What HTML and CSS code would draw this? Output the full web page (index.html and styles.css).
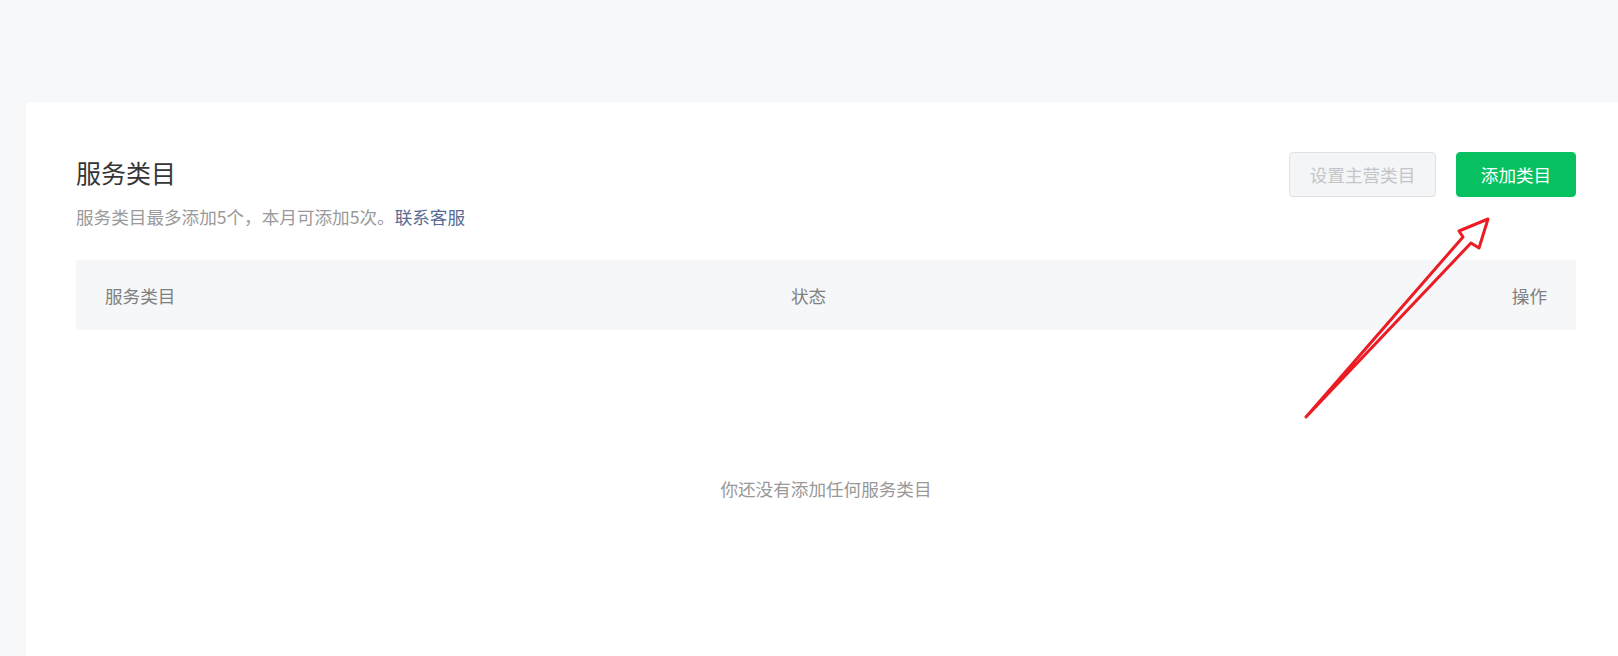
FILE: index.html
```html
<!DOCTYPE html>
<html lang="zh-CN">
<head>
    <meta charset="UTF-8">
    <meta name="viewport" content="width=device-width, initial-scale=1.0">
    <title>服务类目</title>
    <link rel="stylesheet" href="styles.css">
</head>
<body>
    <div class="page">
        <div class="card">
            <div class="card-head">
                <div class="head-text">
                    <h2 class="title">服务类目</h2>
                    <p class="desc">服务类目最多添加5个，本月可添加5次。<a href="#" class="link">联系客服</a></p>
                </div>
                <div class="head-actions">
                    <button class="btn btn-disabled" disabled>设置主营类目</button>
                    <button class="btn btn-primary">添加类目</button>
                </div>
            </div>

            <div class="table">
                <div class="table-head">
                    <div class="col">服务类目</div>
                    <div class="col">状态</div>
                    <div class="col col-right">操作</div>
                </div>
                <div class="table-empty">你还没有添加任何服务类目</div>
            </div>
        </div>
    </div>

    <!-- 标注箭头 -->
    <svg class="mark" width="1618" height="656" viewBox="0 0 1618 656">
        <polygon points="1306,417 1463,237 1459,231 1488,219 1479,248 1471,243"
                 fill="none" stroke="#ec1c24" stroke-width="3" stroke-linejoin="round" />
    </svg>
</body>
</html>
```

FILE: styles.css
```css
html, body {
    margin: 0;
    padding: 0;
    height: 100%;
    overflow: hidden;
}
body {
    font-family: "Noto Sans CJK SC", "Noto Sans", sans-serif;
    background: #f7f8fa;
    color: #353535;
    position: relative;
}
.page {
    padding: 102px 0 0 26px;
}
.card {
    background: #fff;
    border-radius: 4px 0 0 0;
    width: 1500px;
    min-height: 504px;
    padding: 50px 50px 0 50px;
    box-sizing: content-box;
}
.card-head {
    display: flex;
    justify-content: space-between;
    align-items: flex-start;
}
.title {
    margin: 0;
    font-size: 25px;
    font-weight: normal;
    line-height: 40px;
    color: #353535;
}
.desc {
    margin: 12px 0 0 0;
    font-size: 17.6px;
    line-height: 25px;
    color: #9a9a9a;
}
.link {
    color: #576b95;
    text-decoration: none;
}
.head-actions {
    display: flex;
    gap: 20px;
}
.btn {
    height: 45px;
    border-radius: 4px;
    font-family: inherit;
    font-size: 17.6px;
    line-height: 1;
    cursor: pointer;
}
.btn-disabled {
    width: 147px;
    background: #f4f5f7;
    border: 1px solid #dfe1e4;
    color: #c3c5c8;
    cursor: default;
}
.btn-primary {
    width: 120px;
    background: #07c160;
    border: 1px solid #07c160;
    color: #fff;
}
.table {
    margin-top: 31px;
}
.table-head {
    display: grid;
    grid-template-columns: 686px 1fr auto;
    align-items: center;
    height: 70px;
    padding: 0 29px;
    background: #f6f7f9;
    font-size: 17.6px;
    color: #808080;
}
.col-right {
    text-align: right;
}
.table-empty {
    height: 316px;
    display: flex;
    align-items: center;
    justify-content: center;
    font-size: 17.6px;
    color: #999;
}
.mark {
    position: absolute;
    top: 0;
    left: 0;
    pointer-events: none;
}
```
